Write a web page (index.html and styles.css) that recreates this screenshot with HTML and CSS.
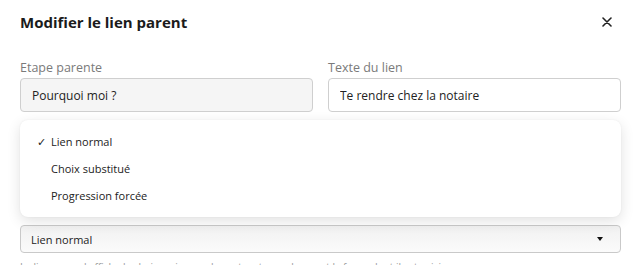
FILE: index.html
```html
<!DOCTYPE html>
<html lang="fr">
<head>
    <meta charset="UTF-8">
    <meta name="viewport" content="width=device-width, initial-scale=1.0">
    <title>Modifier le lien parent</title>
    <link rel="stylesheet" href="styles.css">
</head>
<body>

    <div class="modal">
        <div class="modal-header">
            <h2>Modifier le lien parent</h2>
            <button class="close" aria-label="Fermer">
                <svg width="10" height="10" viewBox="0 0 10 10"><path d="M1 1L9 9M9 1L1 9" stroke="#222" stroke-width="1.6" stroke-linecap="round"/></svg>
            </button>
        </div>

        <div class="row">
            <div class="field">
                <label>Etape parente</label>
                <input type="text" class="readonly" value="Pourquoi moi ?" readonly>
            </div>
            <div class="field">
                <label>Texte du lien</label>
                <input type="text" value="Te rendre chez la notaire">
            </div>
        </div>

        <div class="field type-field">
            <div class="select-wrap">
                <ul class="menu">
                    <li class="selected"><span class="check">✓</span>Lien normal</li>
                    <li><span class="check"></span>Choix substitué</li>
                    <li><span class="check"></span>Progression forcée</li>
                </ul>
                <div class="select">
                    <span>Lien normal</span>
                    <span class="arrow"></span>
                </div>
            </div>
            <p class="hint">Le lien normal affiche le choix au joueur, les autres types changent la façon dont il est suivi.</p>
        </div>
    </div>

</body>
</html>
```

FILE: styles.css
```css
body { margin: 0; background: #fff; font-family: "Open Sans", "Noto Sans", sans-serif; color: #1f1f1f; }
.modal { padding: 0 21px 0 20px; }
.modal-header { display: flex; justify-content: space-between; align-items: center; height: 44px; }
.modal-header h2 { margin: 0; font-size: 15px; font-weight: 700; color: #1b1b1b; }
.close { background: none; border: none; padding: 4px; margin-right: 5px; cursor: pointer; display: flex; }
.row { display: grid; grid-template-columns: 1fr 1fr; gap: 15px; margin-top: 16px; }
.field { display: flex; flex-direction: column; }
.field label { font-size: 12.5px; color: #7a7a7a; margin-bottom: 3px; line-height: 15px; }
input { font-family: inherit; font-size: 12px; color: #222; height: 34px; box-sizing: border-box; padding: 0 11px; border: 1px solid #cfcfcf; border-radius: 4px; background: #fff; outline: none; }
input.readonly { background: #f5f5f5; }
.type-field { margin-top: 113px; }
.select-wrap { position: relative; }
.select { height: 28px; box-sizing: border-box; border: 1px solid #c9c9c9; border-radius: 4px; background: linear-gradient(#f1f1f1, #fbfbfb); display: flex; justify-content: space-between; align-items: center; padding: 0 17px 0 10px; font-size: 11px; color: #222; }
.arrow { width: 0; height: 0; border-left: 3px solid transparent; border-right: 3px solid transparent; border-top: 4px solid #111; }
.menu { position: absolute; left: 0; right: 0; bottom: calc(100% + 8px); margin: 0; padding: 8px 0; list-style: none; background: #fff; border-radius: 8px; box-shadow: 0 4px 14px rgba(0, 0, 0, 0.12), 0 0 2px rgba(0, 0, 0, 0.06); font-size: 11px; color: #222; }
.menu li { display: flex; align-items: center; height: 27px; }
.check { width: 31px; text-align: right; padding-right: 5px; box-sizing: border-box; font-size: 11px; }
.hint { margin: 7px 0 0; font-size: 10px; color: #999; }
```
